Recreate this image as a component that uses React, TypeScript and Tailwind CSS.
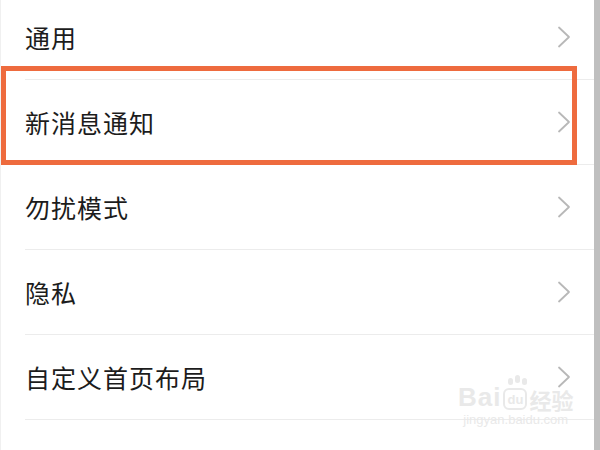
import React from "react";

const items = ["通用", "新消息通知", "勿扰模式", "隐私", "自定义首页布局"];

function Chevron() {
  return (
    <svg width="14" height="22" viewBox="0 0 14 22" fill="none">
      <path d="M2 1.5 L12 11 L2 20.5" stroke="#b8b8b8" strokeWidth="1.8" strokeLinecap="round" strokeLinejoin="round" />
    </svg>
  );
}

export default function App() {
  return (
    <div
      className="relative w-[600px] h-[450px] overflow-hidden bg-white flex"
      style={{ fontFamily: '"Noto Sans CJK SC", "Noto Sans", sans-serif' }}
    >
      <div className="flex-1 flex flex-col mt-[-5px] border-l border-[#f0f0f0]">
        {items.map((t) => (
          <div key={t} className="h-[85px] shrink-0 pl-[24px] flex">
            <div className="flex-1 flex items-center justify-between border-b border-[#ececec] pr-[23px]">
              <span className="text-[25px] leading-none tracking-[1px] text-[#1c1c1c]">{t}</span>
              <Chevron />
            </div>
          </div>
        ))}
      </div>
      <div className="w-[6px] h-full bg-[#bfbfbf]" />

      <div className="absolute left-[1px] top-[66px] w-[576px] h-[99px] border-[5px] border-[#ee6b3e]" />

      <div className="absolute left-[458px] top-[384px] flex flex-col items-center text-[#e9e9e9]">
        <div className="flex items-end leading-none">
          <span className="text-[26px] font-bold tracking-[1px]" style={{ fontFamily: '"Liberation Sans", sans-serif' }}>Bai</span>
          <span className="relative mx-[2px] w-[24px] h-[22px] rounded-[6px] border-2 border-[#e9e9e9] text-[13px] font-bold flex items-center justify-center" style={{ fontFamily: '"Liberation Sans", sans-serif' }}>
            du
            <span className="absolute -top-[12px] left-[3px] flex gap-[2px]">
              <span className="w-[5px] h-[7px] rounded-full bg-[#e9e9e9]" />
              <span className="w-[5px] h-[8px] rounded-full bg-[#e9e9e9] -mt-[3px]" />
              <span className="w-[5px] h-[7px] rounded-full bg-[#e9e9e9]" />
            </span>
          </span>
          <span className="text-[22px] font-bold">经验</span>
        </div>
        <span className="text-[13px] mt-[3px] leading-none" style={{ fontFamily: '"Liberation Sans", sans-serif' }}>jingyan.baidu.com</span>
      </div>
    </div>
  );
}
